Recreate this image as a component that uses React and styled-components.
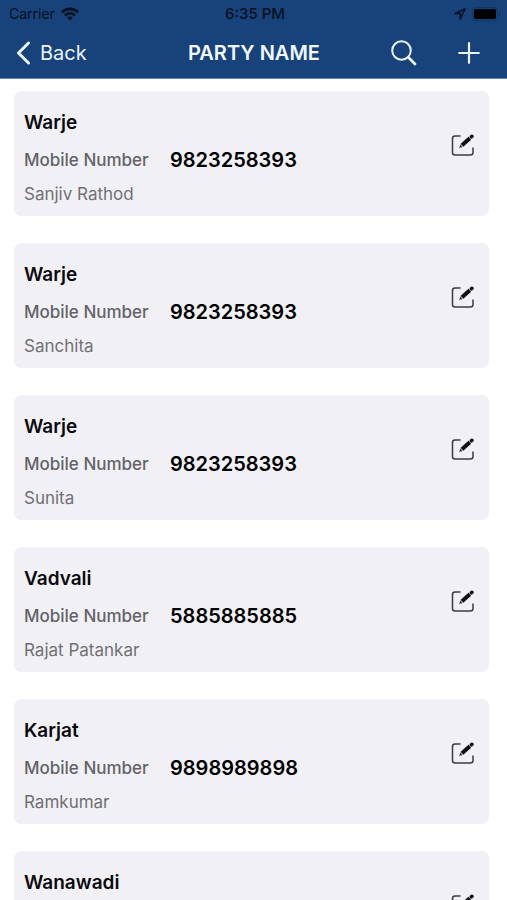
import React from "react";
import styled, { createGlobalStyle } from "styled-components";

const GlobalStyle = createGlobalStyle`
  * {
    box-sizing: border-box;
  }

  body {
    margin: 0;
    background: #ffffff;
    font-family: Inter, "Liberation Sans", sans-serif;
    color: #0b0b0d;
  }
`;

const Screen = styled.div`
  height: 100vh;
  overflow: hidden;
  display: flex;
  flex-direction: column;
`;

const Header = styled.header`
  flex: none;
  background: #17427a;
  border-bottom: 1px solid #6484ac;
`;

const StatusBar = styled.div`
  display: grid;
  grid-template-columns: 1fr auto 1fr;
  align-items: center;
  height: 27px;
  padding: 0 6px 0 9px;
  font-size: 14px;
  color: #04101f;
`;

const StatusGroup = styled.div`
  display: flex;
  align-items: center;
  gap: 6px;
  justify-content: ${(props) => (props.$end ? "flex-end" : "flex-start")};
`;

const Time = styled.span`
  font-size: 15px;
  font-weight: 500;
`;

const NavBar = styled.nav`
  display: grid;
  grid-template-columns: 1fr auto 1fr;
  align-items: center;
  height: 51px;
  padding: 0 27px 0 16px;
`;

const PageTitle = styled.h1`
  margin: 0;
  padding-left: 12px;
  font-size: 20px;
  font-weight: 600;
  color: #f2f8ff;
`;

const NavButton = styled.button`
  display: flex;
  align-items: center;
  gap: 9px;
  padding: 0;
  border: 0;
  background: none;
  font-family: inherit;
  font-size: 20px;
  color: #eaf3ff;
  cursor: pointer;
`;

const NavActions = styled.div`
  display: flex;
  align-items: center;
  justify-content: flex-end;
  gap: 41px;
`;

const PartyList = styled.ul`
  list-style: none;
  margin: 0;
  padding: 12px 18px 0 14px;
  display: flex;
  flex-direction: column;
  gap: 27px;
`;

const Card = styled.li`
  display: flex;
  justify-content: space-between;
  padding: 18px 14px 10px 10px;
  border-radius: 7px;
  background: #f1f0f5;
`;

const PartyName = styled.h2`
  margin: 0 0 11px;
  font-size: 19px;
  font-weight: 600;
  line-height: 28px;
`;

const PhoneRow = styled.div`
  display: flex;
  align-items: center;
  margin-bottom: 10px;
  line-height: 24px;
`;

const PhoneLabel = styled.span`
  width: 146px;
  font-size: 17px;
  font-weight: 500;
  color: #636367;
`;

const PhoneNumber = styled.span`
  font-size: 20px;
  font-weight: 600;
  color: #000000;
`;

const Contact = styled.p`
  margin: 0;
  font-size: 17px;
  line-height: 24px;
  color: #707074;
`;

const EditButton = styled.button`
  align-self: flex-start;
  display: flex;
  margin-top: 25px;
  padding: 0;
  border: 0;
  background: none;
  color: #111113;
  cursor: pointer;
`;

const parties = [
  { id: 1, name: "Warje", mobile: "9823258393", contact: "Sanjiv Rathod" },
  { id: 2, name: "Warje", mobile: "9823258393", contact: "Sanchita" },
  { id: 3, name: "Warje", mobile: "9823258393", contact: "Sunita" },
  { id: 4, name: "Vadvali", mobile: "5885885885", contact: "Rajat Patankar" },
  { id: 5, name: "Karjat", mobile: "9898989898", contact: "Ramkumar" },
  { id: 6, name: "Wanawadi" },
];

const WifiIcon = () => (
  <svg width="18" height="14" viewBox="0 0 18 14" fill="none" stroke="currentColor" strokeWidth="2.6">
    <path d="M1 5.2C5.5.8 12.5.8 17 5.2" />
    <path d="M4 8.5C7 5.7 11 5.7 14 8.5" />
    <path d="M9 13.4 6.2 10.5C7.8 9.1 10.2 9.1 11.8 10.5Z" fill="currentColor" stroke="none" />
  </svg>
);

const LocationIcon = () => (
  <svg width="12" height="12" viewBox="0 0 12 12" fill="none" stroke="currentColor" strokeWidth="1.5" strokeLinejoin="round">
    <path d="M11 1 1 5.5H6.2V11Z" />
  </svg>
);

const BatteryIcon = () => (
  <svg width="29" height="14" viewBox="0 0 29 14">
    <rect x="0.5" y="0.5" width="25" height="13" rx="3.5" fill="none" stroke="#123663" />
    <rect x="2" y="2" width="22" height="10" rx="2" fill="#000000" />
    <path d="M27 4.5C29 5.5 29 8.5 27 9.5Z" fill="#123663" />
  </svg>
);

const BackIcon = () => (
  <svg width="15" height="24" viewBox="0 0 15 24" fill="none" stroke="currentColor" strokeWidth="3" strokeLinecap="round" strokeLinejoin="round">
    <path d="M12.5 2 2.5 12 12.5 22" />
  </svg>
);

const SearchIcon = () => (
  <svg width="26" height="26" viewBox="0 0 26 26" fill="none" stroke="currentColor" strokeLinecap="round">
    <circle cx="10.5" cy="10.5" r="9.3" strokeWidth="2" />
    <path d="M17.500 17.500 24 24" strokeWidth="2.8" />
  </svg>
);

const PlusIcon = () => (
  <svg width="22" height="22" viewBox="0 0 22 22" fill="none" stroke="currentColor" strokeWidth="2.2" strokeLinecap="round">
    <path d="M11 1.2V20.800M1.2 11H20.800" />
  </svg>
);

const EditIcon = () => (
  <svg width="24" height="24" viewBox="0 0 24 24" fill="none">
    <path d="M9 2H4Q1.500 2 1.500 4.500V18.500Q1.500 21 4 21H19.500Q22 21 22 18.500V14" stroke="#3c3c40" strokeWidth="1.5" strokeLinecap="round" />
    <path d="M11 11.300 18.800 4.200" stroke="currentColor" strokeWidth="4" />
    <path d="M9.400 10.200 11.900 13 8 14Z" fill="#4a4a4e" />
    <path d="M20.400 2.800 20.900 2.300" stroke="currentColor" strokeWidth="3.6" strokeLinecap="round" />
  </svg>
);

const PartyCard = ({ party }) => (
  <Card>
    <div>
      <PartyName>{party.name}</PartyName>
      {party.mobile && (
        <PhoneRow>
          <PhoneLabel>Mobile Number</PhoneLabel>
          <PhoneNumber>{party.mobile}</PhoneNumber>
        </PhoneRow>
      )}
      {party.contact && <Contact>{party.contact}</Contact>}
    </div>
    <EditButton type="button" aria-label={`Edit ${party.name}`}>
      <EditIcon />
    </EditButton>
  </Card>
);

const App = () => {
  return (
    <Screen>
      <GlobalStyle />
      <Header>
        <StatusBar>
          <StatusGroup>
            <span>Carrier</span>
            <WifiIcon />
          </StatusGroup>
          <Time>6:35 PM</Time>
          <StatusGroup $end>
            <LocationIcon />
            <BatteryIcon />
          </StatusGroup>
        </StatusBar>
        <NavBar>
          <NavButton type="button">
            <BackIcon />
            Back
          </NavButton>
          <PageTitle>PARTY NAME</PageTitle>
          <NavActions>
            <NavButton type="button" aria-label="Search">
              <SearchIcon />
            </NavButton>
            <NavButton type="button" aria-label="Add party">
              <PlusIcon />
            </NavButton>
          </NavActions>
        </NavBar>
      </Header>
      <PartyList>
        {parties.map((party) => (
          <PartyCard key={party.id} party={party} />
        ))}
      </PartyList>
    </Screen>
  );
};

export default App;
